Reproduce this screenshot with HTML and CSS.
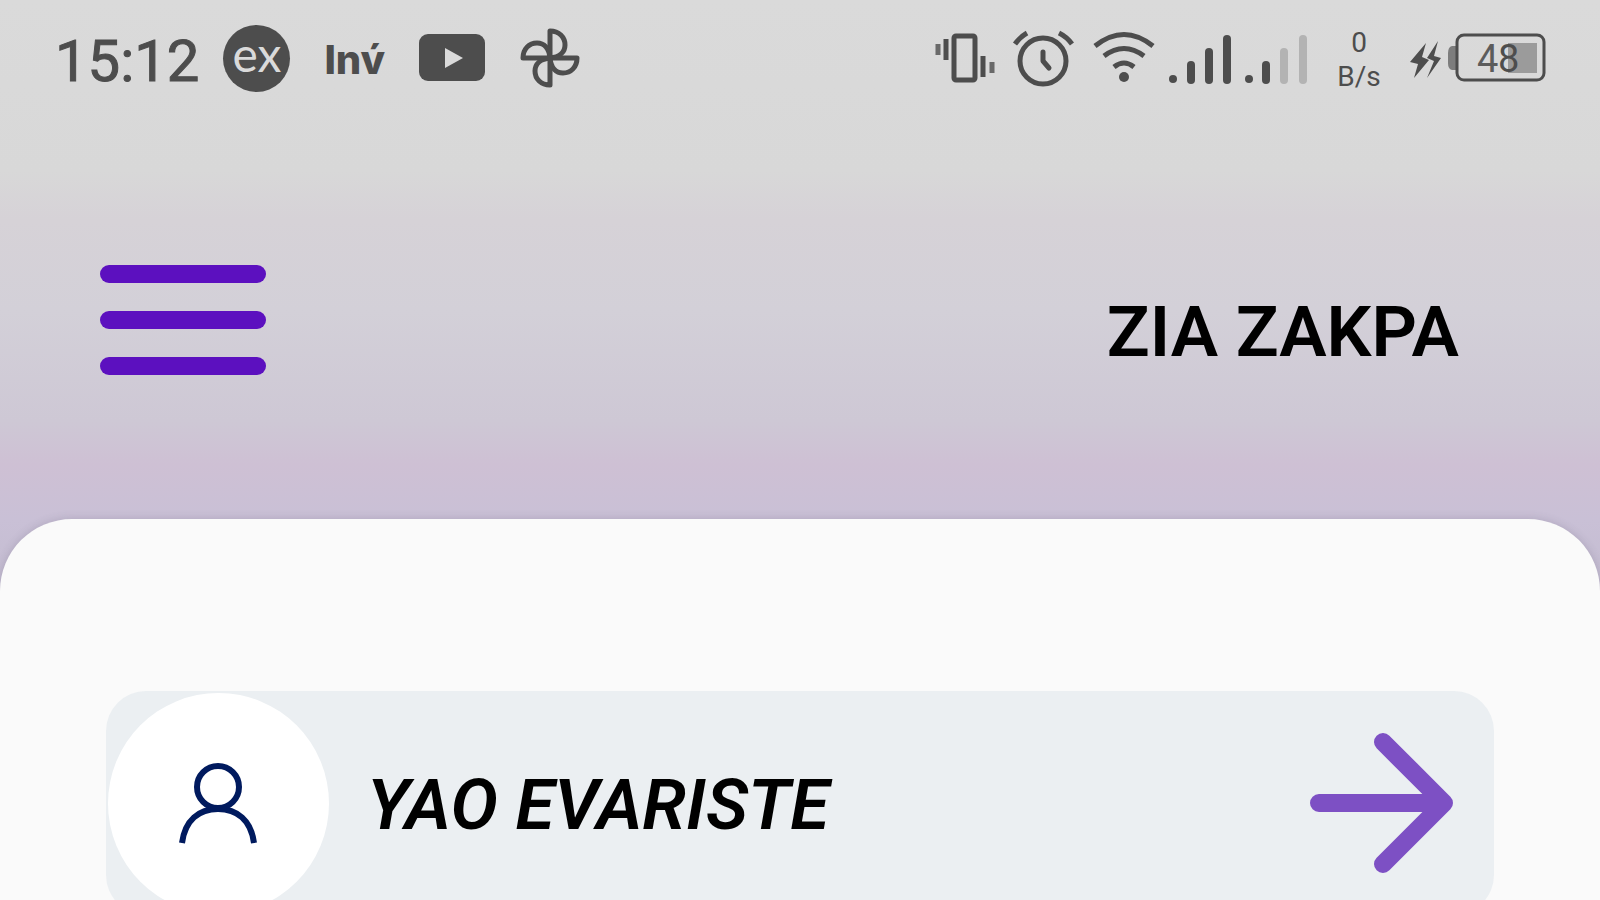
FILE: index.html
```html
<!DOCTYPE html>
<html lang="fr">
<head>
<meta charset="utf-8">
<meta name="viewport" content="width=device-width, initial-scale=1">
<title>ZIA ZAKPA</title>
<link rel="stylesheet" href="styles.css">
</head>
<body>
<div class="status">
  <div class="status-group status-left">
    <time class="clock">15:12</time>
    <span class="badge-ex">ex</span>
    <span class="inv">Inv́</span>
    <svg class="icon" width="66" height="66" viewBox="0 0 66 66"><rect y="9" width="66" height="47" rx="9" fill="#4d4d4d"/><path d="M26 23v20l18-10z" fill="#dadada"/></svg>
    <svg class="icon" width="62" height="66" viewBox="0 0 62 66"><g fill="none" stroke="#4d4d4d" stroke-width="5" stroke-linejoin="round"><path d="M31 33V6c9 0 15 6 15 14 0 7-5 12-15 13z"/><path d="M31 33h27c0 9-6 15-14 15-7 0-12-5-13-15z"/><path d="M31 33v27c-9 0-15-6-15-14 0-7 5-12 15-13z"/><path d="M31 33H4c0-9 6-15 14-15 7 0 12 5 13 15z"/></g></svg>
  </div>
  <div class="status-group status-right">
    <svg class="icon vibrate" width="64" height="66" viewBox="0 0 64 66"><g fill="none" stroke="#4d4d4d" stroke-width="5"><rect x="22" y="11" width="21" height="44" rx="2"/><path d="M14 14v21M51 31v21"/><path d="M6 19v11M60 37v11" stroke="#696969"/></g></svg>
    <svg class="icon alarm" width="62" height="66" viewBox="0 0 62 66"><g fill="none" stroke="#4d4d4d" stroke-width="5" stroke-linecap="round"><circle cx="31" cy="36" r="23"/><path d="M31 27v9l6 7" stroke-linejoin="round"/><path d="M3 19Q8 12 15 8M47 8q8 4 13 11" stroke-linecap="butt"/></g></svg>
    <svg class="icon wifi" width="64" height="66" viewBox="0 0 64 66"><g fill="none" stroke="#4d4d4d" stroke-width="5"><path d="M3 21Q32-2 61 21M12 31q20-15 40 0M22 42q10-8 20 0"/></g><circle cx="32" cy="52" r="5" fill="#4d4d4d"/></svg>
    <svg class="icon signal" width="64" height="66" viewBox="0 0 64 66"><g fill="#4d4d4d"><circle cx="5" cy="54" r="4"/><rect x="19" y="36" width="8" height="23" rx="4"/><rect x="37" y="23" width="8" height="36" rx="4"/><rect x="55" y="10" width="8" height="49" rx="4"/></g></svg>
    <svg class="icon signal" width="64" height="66" viewBox="0 0 64 66"><g fill="#4d4d4d"><circle cx="5" cy="54" r="4"/><rect x="18" y="36" width="8" height="23" rx="4"/><rect x="36" y="23" width="8" height="36" rx="4" fill="#b3b3b3"/><rect x="55" y="10" width="8" height="49" rx="4" fill="#b3b3b3"/></g></svg>
    <div class="rate"><span>0</span><span>B/s</span></div>
    <svg class="icon" width="136" height="66" viewBox="0 0 136 66"><path d="M16 18 0 37l8 2-4 14 15-18-7-3zM28 16 17 33l7 3-7 17 14-20-7-2z" fill="#4d4d4d"/><path d="M46 21h-4q-4 1-4 7v10q0 6 4 7h4z" fill="#7d7d7d"/><rect x="47" y="10" width="87" height="45" rx="7" fill="none" stroke="#4d4d4d" stroke-width="3"/><rect x="98" y="18" width="29" height="30" fill="#9b9b9b"/><text x="67" y="47" class="battery-digit">4</text><text x="88" y="47" class="battery-digit battery-digit-dark">8</text></svg>
  </div>
</div>
<header class="header">
  <button class="menu" aria-label="Menu"><span></span><span></span><span></span></button>
  <h1 class="title">ZIA ZAKPA</h1>
</header>
<main class="panel">
  <button class="card">
    <span class="avatar"><svg width="80" height="82" viewBox="0 0 80 82" fill="none" stroke="#001a5e" stroke-width="6"><circle cx="39" cy="25" r="21"/><path d="M3 81C6 58 20 47 39 47s33 11 36 34"/></svg></span>
    <span class="name">YAO EVARISTE</span>
    <svg class="arrow" width="144" height="144" viewBox="0 0 144 144" fill="none" stroke="#7d50c4" stroke-width="18" stroke-linecap="round" stroke-linejoin="round"><path d="M9 72h124M73 11l61 61-61 61"/></svg>
  </button>
</main>
</body>
</html>
```
FILE: styles.css
```css
* { box-sizing: border-box; }

body {
  margin: 0;
  height: 100vh;
  overflow: hidden;
  font-family: Roboto, "Liberation Sans", sans-serif;
  background: linear-gradient(#dadada 0, #d8d8d8 170px, #d6d2d7 220px, #d3d0d8 310px, #cec8d5 420px, #cec0d4 465px, #c9c0d6 520px, #c3bcd0 600px);
}

.status {
  display: flex;
  justify-content: space-between;
  padding: 25px 54px 0 55px;
  height: 118px;
  color: #4d4d4d;
}

.status-group { display: flex; height: 66px; align-items: center; }
.status-left { gap: 34px; }
.icon { display: block; flex: none; }

.clock { font-size: 58px; line-height: 66px; margin-right: -10px; padding-top: 6px; -webkit-text-stroke: 1px #4d4d4d; }

.badge-ex {
  width: 67px;
  height: 67px;
  border-radius: 50%;
  background: #4d4d4d;
  color: #dadada;
  font: 48px/58px Lato, sans-serif;
  text-align: center;
}

.inv { width: 61px; padding-top: 4px; font: 800 40px/66px Inter, sans-serif; }

.vibrate { margin-right: 16px; }
.alarm { margin-right: 18px; }
.wifi { margin-right: 12px; }
.signal { margin-right: 12px; }

.rate {
  display: flex;
  flex-direction: column;
  align-items: center;
  width: 62px;
  margin: 0 20px 0 8px;
  padding-top: 4px;
  font-size: 28px;
  line-height: 34px;
}

.battery-digit { font-size: 38px; fill: #5c5c5c; }
.battery-digit-dark { fill: #4d4d4d; }

.header {
  display: flex;
  justify-content: space-between;
  align-items: flex-start;
  height: 401px;
  padding: 147px 141px 0 100px;
}

.menu {
  display: flex;
  flex-direction: column;
  gap: 28px;
  width: 166px;
  padding: 0;
  border: 0;
  background: none;
}

.menu span { display: block; width: 100%; height: 18px; border-radius: 9px; background: #5c10bf; }

.title { margin: 25px 0 0; font-size: 71px; line-height: 84px; font-weight: 600; color: #000; }

.panel {
  min-height: 420px;
  padding: 172px 106px 0;
  border-radius: 72px 72px 0 0;
  background: #fafafa;
  box-shadow: 0 0 10px rgba(70, 60, 90, 0.2);
}

.card {
  display: flex;
  align-items: center;
  width: 100%;
  height: 224px;
  padding: 0 40px 0 2px;
  border: 0;
  border-radius: 40px;
  background: #ebeff2;
  font-family: inherit;
  color: #000;
}

.avatar {
  display: flex;
  align-items: center;
  justify-content: center;
  width: 221px;
  height: 221px;
  border-radius: 50%;
  background: #fff;
}

.name { margin-left: 38px; padding-top: 4px; font-size: 71px; line-height: 84px; font-weight: 600; font-style: italic; }
.arrow { margin-left: auto; }
```
